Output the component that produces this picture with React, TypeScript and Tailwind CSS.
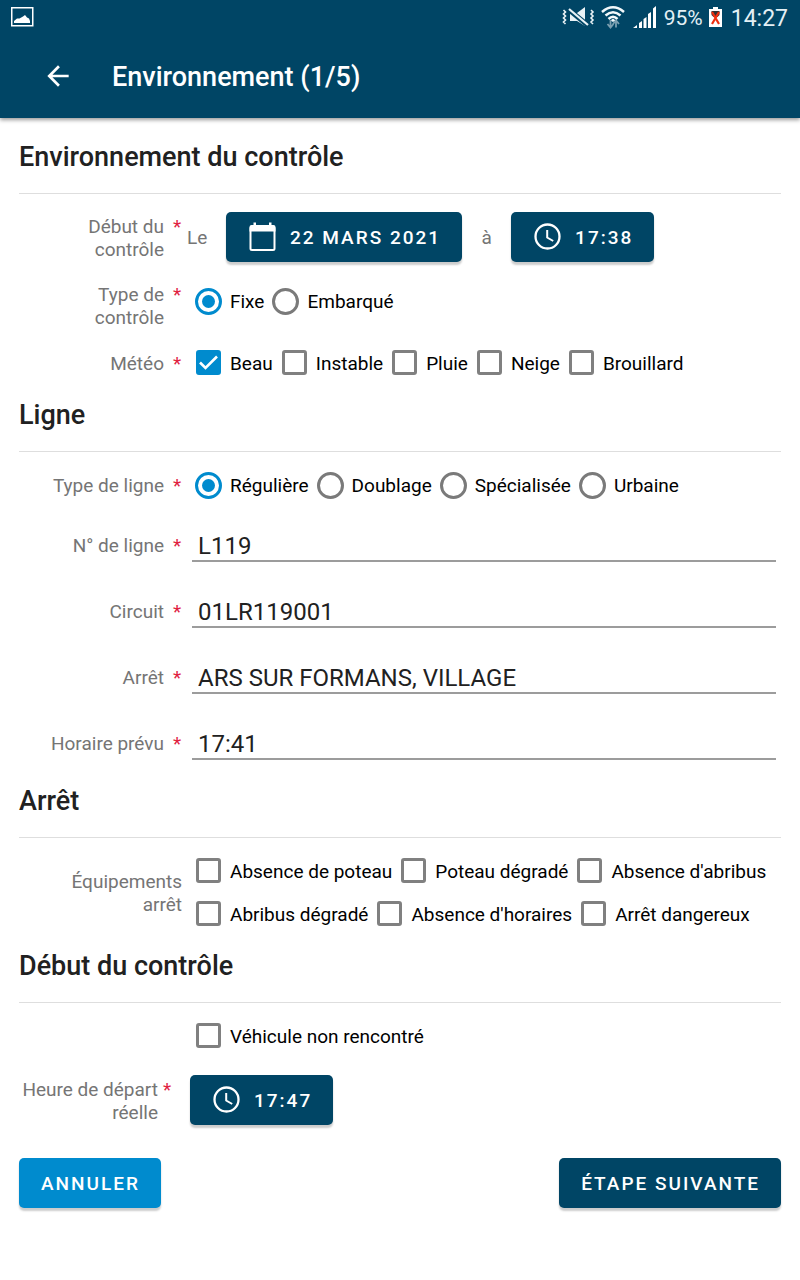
import { useId, type ReactNode } from "react";

function PictureIcon() {
  return (
    <svg width="24" height="20" viewBox="0 0 24 20" aria-hidden="true">
      <rect x="1.750" y="0.750" width="21" height="18" fill="none" stroke="#fff" strokeWidth="1.500" />
      <path d="M4 16v-2l3-2.500h2.500L13 9.500l2-1.500 2 2.500 2 1 1 2.500v2z" fill="#fff" />
    </svg>
  );
}

function MutedIcon() {
  return (
    <svg width="33" height="20" viewBox="0 0 33 20" aria-hidden="true">
      <path d="M8 6h7l8-6v19l-8-5H8z" fill="#e9f2f6" />
      <path d="M5.500 1.500L26 18.500" stroke="#004565" strokeWidth="5" />
      <path d="M7 2l19 16" stroke="#e9f2f6" strokeWidth="2.200" />
      <path
        d="M1.500 3l2 2-2 2 2 2-2 2 2 2-2 2 2 2M29 3l2 2-2 2 2 2-2 2 2 2-2 2 2 2"
        fill="none"
        stroke="#e9f2f6"
        strokeWidth="1.600"
      />
    </svg>
  );
}

function WifiIcon() {
  return (
    <svg width="24" height="24" viewBox="0 0 24 24" aria-hidden="true">
      <g fill="none" stroke="#f2f8fa" strokeWidth="2.500">
        <path d="M1 7Q12-2.500 23 7" />
        <path d="M4.500 10.500Q12 4 19.500 10.500" />
        <path d="M7.500 14Q12 9.500 16.500 14" />
      </g>
      <path d="M9.500 15.500L12 13.500l2.500 2-2.500 1.500z" fill="#f2f8fa" />
      <path
        d="M9.500 15v7M6.500 19l3 3.500 3-3.500M15 22.500V16M12 19l3-3.500 3 3.500"
        fill="none"
        stroke="#7b9fb0"
        strokeWidth="1.800"
      />
    </svg>
  );
}

function SignalIcon() {
  return (
    <svg width="23" height="22" viewBox="0 0 23 22" aria-hidden="true">
      <path d="M0 22l4-3v3zM6 17l3-2v7H6zM10.500 13l3-2v11h-3zM15 8l3-2v16h-3zM20 2.500L23 0v22h-3z" fill="#fff" />
    </svg>
  );
}

function BatteryIcon() {
  return (
    <svg width="13" height="20" viewBox="0 0 13 20" aria-hidden="true">
      <path d="M4 0h5v2h4v18H0V2h4z" fill="#fff" />
      <path d="M2.500 4h8v4l-2 2h-4l-2-2z" fill="#333" />
      <path d="M3 5l7 12M10 5L3 17" stroke="#f03010" strokeWidth="2.200" />
    </svg>
  );
}

function CalendarIcon() {
  return (
    <svg width="28" height="30" viewBox="0 0 28 30" aria-hidden="true">
      <rect x="2.500" y="5" width="24" height="23" rx="1.500" fill="none" stroke="#fff" strokeWidth="2" />
      <path
        d="M3.500 3h22a2 2 0 0 1 2 2v4.500h-26V5a2 2 0 0 1 2-2zM5.500 0.500H8V4H5.500zM21 0.500h2.500V4H21z"
        fill="#fff"
      />
    </svg>
  );
}

function ClockIcon() {
  return (
    <svg width="28" height="28" viewBox="0 0 28 28" aria-hidden="true">
      <circle cx="14.500" cy="13.500" r="12" fill="none" stroke="#fff" strokeWidth="2.300" />
      <path d="M14.200 7v7.500l6 3.500" fill="none" stroke="#fff" strokeWidth="2" />
    </svg>
  );
}

function Button({ children, tone = "dark" }: { children: ReactNode; tone?: "dark" | "light" }) {
  return (
    <button
      type="button"
      className={`flex h-[50px] items-center gap-[14px] rounded-[5px] pr-[21px] pl-[22px] text-[19px] font-medium tracking-[2px] text-white shadow-[0_3px_2px_rgba(0,0,0,0.2)] ${
        tone === "dark" ? "bg-[#004565]" : "bg-[#008bce]"
      }`}
    >
      {children}
    </button>
  );
}

function Option({
  type,
  label,
  name,
  checked,
}: {
  type: "radio" | "checkbox";
  label: string;
  name: string;
  checked?: boolean;
}) {
  return (
    <label className="flex h-[43px] items-center gap-2 text-black">
      {type === "radio" ? (
        <span className="grid size-[27px] place-items-center">
          <input
            type="radio"
            name={name}
            defaultChecked={checked}
            className="peer col-start-1 row-start-1 size-[27px] appearance-none rounded-full border-3 border-[#7a7a7a] checked:border-[#008bce]"
          />
          <span className="pointer-events-none col-start-1 row-start-1 hidden size-[13px] rounded-full bg-[#008bce] peer-checked:block" />
        </span>
      ) : (
        <span className="grid size-[27px] items-start justify-items-center">
          <input
            type="checkbox"
            name={name}
            defaultChecked={checked}
            className="peer col-start-1 row-start-1 size-[25px] appearance-none rounded-[3px] border-3 border-[#808080] checked:border-[#008bce] checked:bg-[#008bce]"
          />
          <svg
            width="25"
            height="25"
            viewBox="0 0 25 25"
            aria-hidden="true"
            className="pointer-events-none col-start-1 row-start-1 hidden peer-checked:block"
          >
            <path d="M4 12.500l5.500 5.500L21 6.500" fill="none" stroke="#fff" strokeWidth="2.600" />
          </svg>
        </span>
      )}
      <span>{label}</span>
    </label>
  );
}

function Options({
  type,
  legend,
  items,
  selected,
}: {
  type: "radio" | "checkbox";
  legend: string;
  items: string[];
  selected?: string;
}) {
  return (
    <div
      role={type === "radio" ? "radiogroup" : "group"}
      aria-label={legend}
      className="ml-[13px] flex min-w-0 flex-1 flex-wrap gap-x-2"
    >
      {items.map((item) => (
        <Option key={item} type={type} name={legend} label={item} checked={item === selected} />
      ))}
    </div>
  );
}

function LabelText({ children, required = true }: { children: ReactNode; required?: boolean }) {
  return (
    <span className="flex w-[163px] shrink-0 justify-end gap-[9px] text-right text-[#757575]">
      <span>{children}</span>
      {required && <span className="w-[9px] text-left text-[#e0213f]">*</span>}
    </span>
  );
}

function Section({ title, children }: { title: string; children: ReactNode }) {
  return (
    <section>
      <h2 className="border-b border-[#dedede] pb-5 text-[27px] leading-8 font-medium text-[#212121]">{title}</h2>
      {children}
    </section>
  );
}

function TextRow({ label, value }: { label: string; value: string }) {
  const id = useId();
  return (
    <div className="flex h-[66px] items-start">
      <label htmlFor={id} className="pt-4">
        <LabelText>{label}</LabelText>
      </label>
      <input
        id={id}
        type="text"
        defaultValue={value}
        className="mr-[5px] ml-[10px] h-11 min-w-0 flex-1 border-b-2 border-[#9c9c9c] bg-transparent px-[6px] pt-[14px] text-2xl leading-7 text-[#212121] outline-none"
      />
    </div>
  );
}

export default function App() {
  return (
    <div className="min-h-screen bg-white font-['Roboto',sans-serif] text-[19px] leading-[23px]">
      <header className="bg-[#004565] text-white shadow-[0_2px_4px_rgba(0,0,0,0.4)]">
        <div className="flex h-[34px] items-center justify-between pr-3 pl-[10px]">
          <PictureIcon />
          <div className="flex items-center text-[#e4f0f5]">
            <MutedIcon />
            <span className="ml-[6px]">
              <WifiIcon />
            </span>
            <span className="ml-2">
              <SignalIcon />
            </span>
            <span className="ml-2 pt-[2px] text-[21px]">95%</span>
            <span className="ml-[6px]">
              <BatteryIcon />
            </span>
            <span className="ml-[9px] pt-[2px] text-[23px]">14:27</span>
          </div>
        </div>
        <div className="flex h-[84px] items-center pl-[42px]">
          <button type="button" aria-label="Retour" className="size-8">
            <svg width="32" height="32" viewBox="0 0 24 24" fill="#fff" aria-hidden="true">
              <path d="M20 11H7.830l5.590-5.590L12 4l-8 8 8 8 1.410-1.410L7.830 13H20v-2z" />
            </svg>
          </button>
          <h1 className="ml-[38px] pt-[2px] text-[27px] leading-8 font-medium">Environnement (1/5)</h1>
        </div>
      </header>

      <main className="px-[19px] pt-[23px] pb-[72px]">
        <Section title="Environnement du contrôle">
          <div className="pt-[18px] pb-[14px]">
            <div className="flex items-start">
              <div className="pt-[3px]">
                <LabelText>
                  Début du
                  <br />
                  contrôle
                </LabelText>
              </div>
              <div className="ml-[5px] flex items-center text-[#757575]">
                <span className="w-[39px]">Le</span>
                <Button>
                  <CalendarIcon />
                  22 MARS 2021
                </Button>
                <span className="w-[49px] text-center">à</span>
                <Button>
                  <ClockIcon />
                  17:38
                </Button>
              </div>
            </div>
            <div className="flex items-start pt-[18px]">
              <div className="pt-[3px]">
                <LabelText>
                  Type de
                  <br />
                  contrôle
                </LabelText>
              </div>
              <Options type="radio" legend="Type de contrôle" items={["Fixe", "Embarqué"]} selected="Fixe" />
            </div>
            <div className="flex items-center pt-[13px]">
              <LabelText>Météo</LabelText>
              <Options
                type="checkbox"
                legend="Météo"
                items={["Beau", "Instable", "Pluie", "Neige", "Brouillard"]}
                selected="Beau"
              />
            </div>
          </div>
        </Section>

        <Section title="Ligne">
          <div className="pt-3 pb-[3px]">
            <div className="flex items-center pb-[11px]">
              <LabelText>Type de ligne</LabelText>
              <Options
                type="radio"
                legend="Type de ligne"
                items={["Régulière", "Doublage", "Spécialisée", "Urbaine"]}
                selected="Régulière"
              />
            </div>
            <TextRow label="N° de ligne" value="L119" />
            <TextRow label="Circuit" value="01LR119001" />
            <TextRow label="Arrêt" value="ARS SUR FORMANS, VILLAGE" />
            <TextRow label="Horaire prévu" value="17:41" />
          </div>
        </Section>

        <Section title="Arrêt">
          <div className="flex items-center pt-3 pb-[14px]">
            <LabelText required={false}>
              Équipements
              <br />
              arrêt
            </LabelText>
            <Options
              type="checkbox"
              legend="Équipements arrêt"
              items={[
                "Absence de poteau",
                "Poteau dégradé",
                "Absence d'abribus",
                "Abribus dégradé",
                "Absence d'horaires",
                "Arrêt dangereux",
              ]}
            />
          </div>
        </Section>

        <Section title="Début du contrôle">
          <div className="pt-3 pl-[176px]">
            <Option type="checkbox" name="vehicule" label="Véhicule non rencontré" />
          </div>
          <div className="flex items-start pt-[17px]">
            <div className="flex w-[171px] gap-[5px] pt-[3px] text-right text-[#757575]">
              <span className="w-[139px]">
                Heure de départ
                <br />
                réelle
              </span>
              <span className="text-[#e0213f]">*</span>
            </div>
            <Button>
              <ClockIcon />
              17:47
            </Button>
          </div>
        </Section>

        <div className="flex justify-between pt-[33px]">
          <Button tone="light">ANNULER</Button>
          <Button>ÉTAPE SUIVANTE</Button>
        </div>
      </main>
    </div>
  );
}
